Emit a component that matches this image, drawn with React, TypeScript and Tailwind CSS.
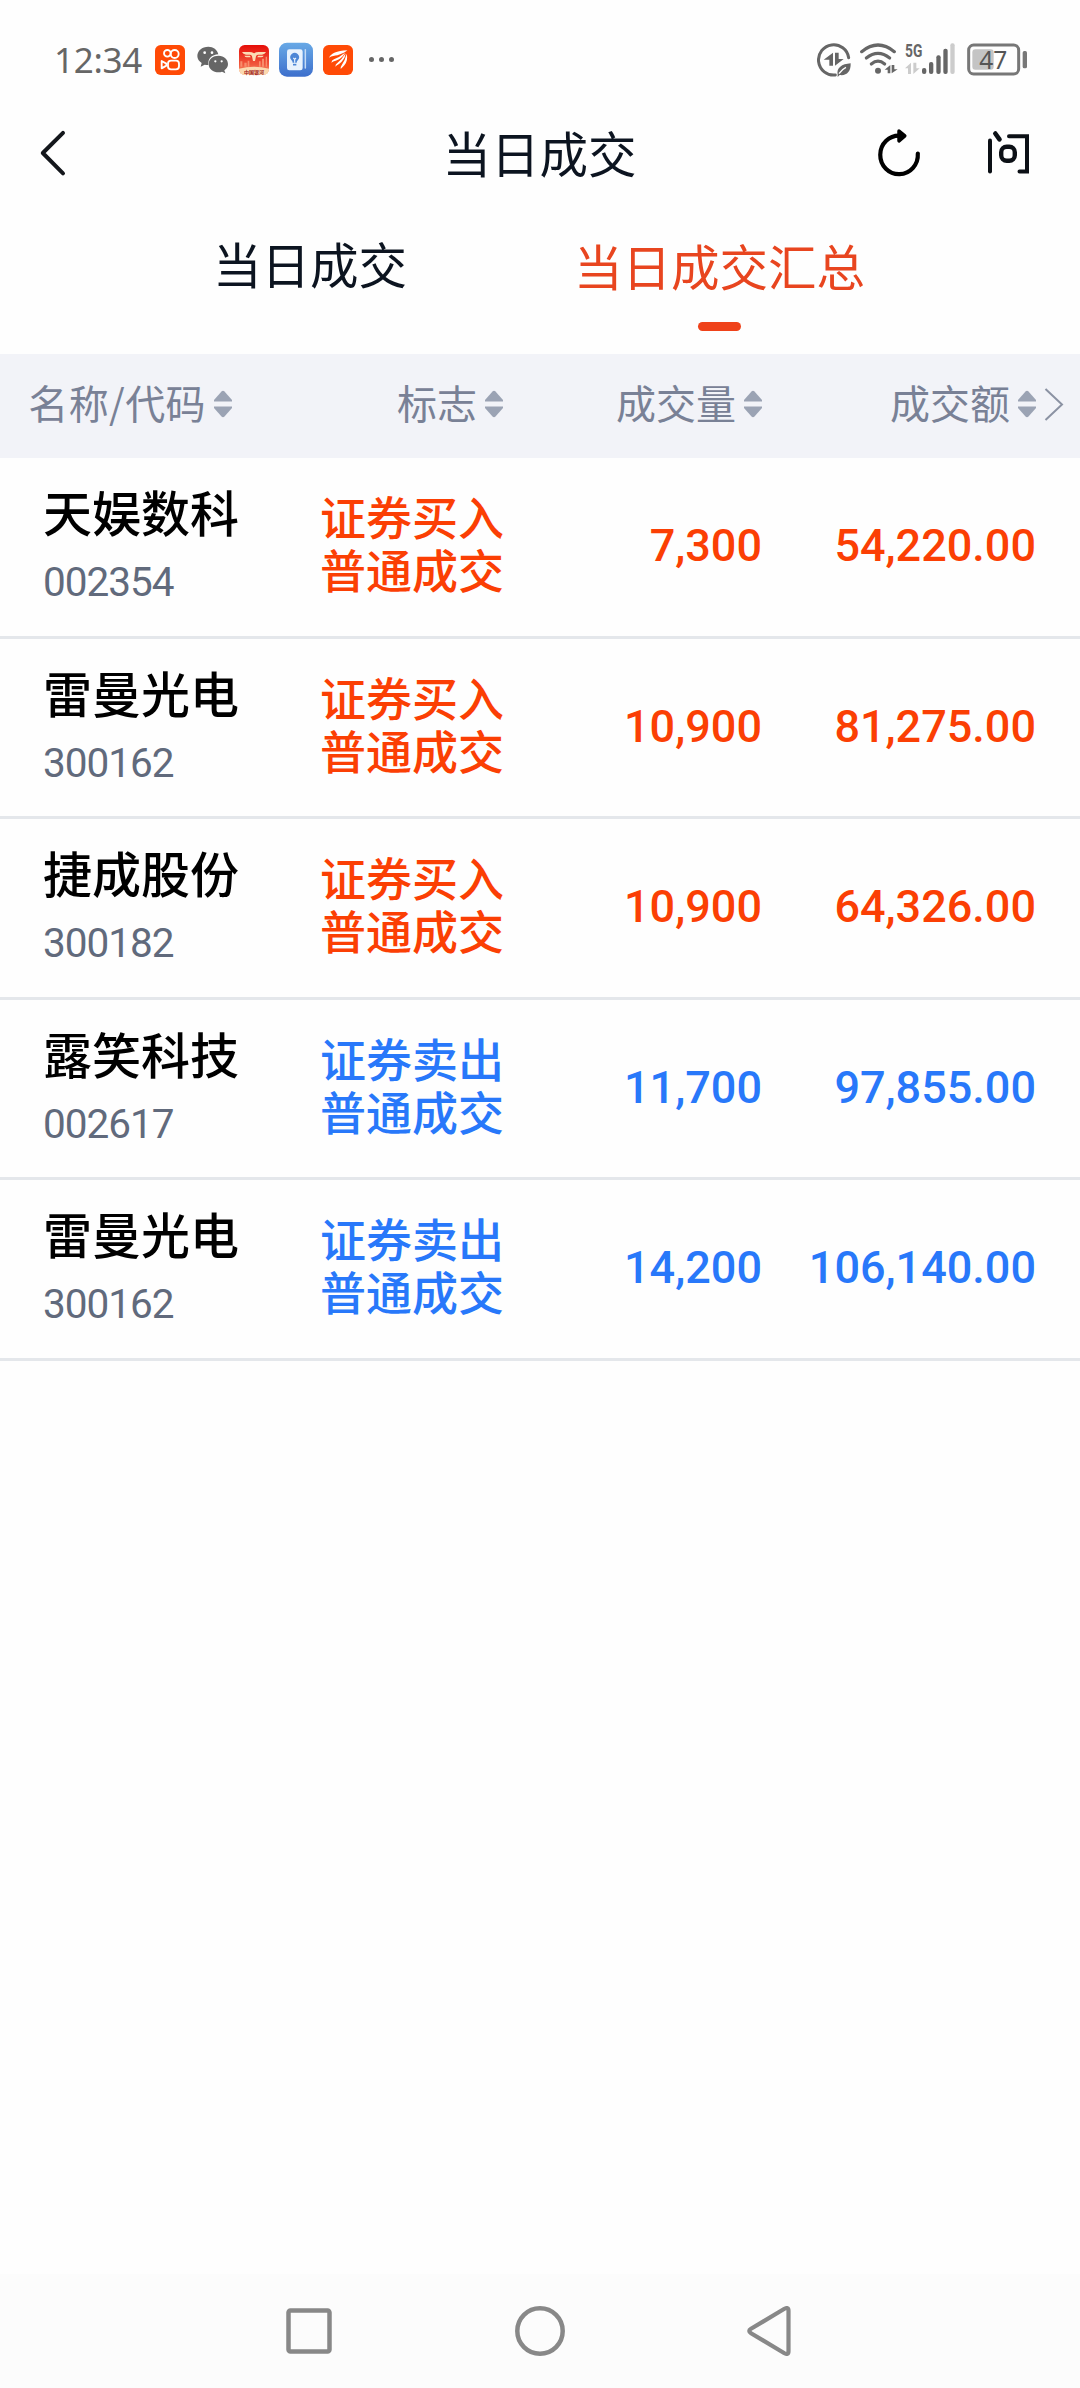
import clsx from "clsx";

interface Deal {
  name: string;
  code: string;
  side: "buy" | "sell";
  volume: string;
  amount: string;
}

const deals: Deal[] = [
  { name: "天娱数科", code: "002354", side: "buy", volume: "7,300", amount: "54,220.00" },
  { name: "雷曼光电", code: "300162", side: "buy", volume: "10,900", amount: "81,275.00" },
  { name: "捷成股份", code: "300182", side: "buy", volume: "10,900", amount: "64,326.00" },
  { name: "露笑科技", code: "002617", side: "sell", volume: "11,700", amount: "97,855.00" },
  { name: "雷曼光电", code: "300162", side: "sell", volume: "14,200", amount: "106,140.00" },
];

function StatusBar() {
  return (
    <div className="flex h-[110px] items-start pt-[42px] text-[#666666]">
      <div className="ml-[54px] w-[101px] font-['Noto_Sans'] text-[35px] leading-[35px] tracking-[-0.3px] whitespace-nowrap">
        12:34
      </div>
      {/* video app */}
      <svg className="h-[36px] w-[30px]" viewBox="0 0 90 108" fill="none">
        <rect y="9" width="90" height="90" rx="17" fill="#ff4a06" />
        <g stroke="#fff" strokeWidth="5.5">
          <circle cx="37" cy="34" r="10" />
          <circle cx="59" cy="36" r="12" />
          <rect x="39" y="56" width="33" height="26" rx="9" />
          <path d="M20 57v22l14-8v-6z" strokeLinejoin="round" />
        </g>
      </svg>
      {/* chat app */}
      <svg className="ml-[11px] h-[36px] w-[33px]" viewBox="0 0 99 108">
        <path
          d="M37 14C18 14 4 26 4 42c0 9 5 16 13 21l-3 11 12-6c4 1 7 1 11 1C35 50 48 38 67 37 64 23 52 14 37 14z"
          fill="#666"
        />
        <path
          d="M68 41c-17 0-30 10-30 25s13 25 30 25c4 0 7-1 10-2l10 5-3-9c7-5 11-11 11-19 0-14-12-25-28-25z"
          fill="#666"
        />
        <circle cx="26" cy="32" r="4" fill="#fff" />
        <circle cx="48" cy="32" r="4" fill="#fff" />
        <circle cx="58" cy="58" r="3.4" fill="#fff" />
        <circle cx="77" cy="58" r="3.4" fill="#fff" />
      </svg>
      {/* broker app */}
      <svg className="ml-[10px] h-[36px] w-[30px]" viewBox="0 0 90 108">
        <defs>
          <linearGradient id="broker" x1="0" y1="0" x2="0" y2="1">
            <stop offset="0" stopColor="#e60d08" />
            <stop offset="0.65" stopColor="#f0573c" />
            <stop offset="1" stopColor="#f7a47c" />
          </linearGradient>
          <clipPath id="brokerClip">
            <rect y="9" width="90" height="90" rx="17" />
          </clipPath>
        </defs>
        <g clipPath="url(#brokerClip)">
          <rect y="9" width="90" height="90" fill="url(#broker)" />
          <path d="M4 74V58h6v16zM16 74V62h7v12zM26 74V56h5v18zM60 74V58h5v16zM69 74V50h6v24zM80 74V44h4v30z" fill="#f88d6c" />
          <path d="M9 30h22q8 0 14 4 6-4 14-4h22q-3 7-12 8H57q-5 1-6 5l-3 14h-6l-3-14q-1-4-6-5H21q-9-1-12-8z" fill="#fbdcb4" />
          <path d="M16 41h17l2 5H24q-6 0-8-5zM74 41H57l-2 5h11q6 0 8-5z" fill="#fbdcb4" />
          <path d="M0 80q45-12 90 0v20H0z" fill="#fbd9b0" />
        </g>
        <text x="45" y="95" textAnchor="middle" fontSize="15" fontWeight="700" fill="#a02018" fontFamily="'Noto Sans CJK SC', sans-serif">
          中国银河
        </text>
      </svg>
      {/* notes app */}
      <svg className="ml-[10px] h-[36px] w-[34px]" viewBox="0 0 102 108" fill="none">
        <defs>
          <linearGradient id="notes" x1="0" y1="0" x2="0" y2="1">
            <stop offset="0" stopColor="#68a9e6" />
            <stop offset="1" stopColor="#3d6fcc" />
          </linearGradient>
        </defs>
        <rect y="2" width="102" height="102" rx="24" fill="url(#notes)" />
        <rect x="24" y="22" width="47" height="63" rx="7" fill="#e8f2fd" />
        <path d="M79 23v55" stroke="#c4dbf6" strokeWidth="4.5" strokeLinecap="round" />
        <path d="M41 62q0-4-4-8a13 13 0 1 1 20 0q-4 4-4 8z" fill="#4c86d6" />
        <path d="M47 62V52l-4-4m4 4l4-4" stroke="#e8f2fd" strokeWidth="3.5" />
        <path d="M42 68h10" stroke="#4c86d6" strokeWidth="5" />
      </svg>
      {/* delivery app */}
      <svg className="ml-[10px] h-[36px] w-[30px]" viewBox="0 0 90 108" fill="#fff">
        <rect y="9" width="90" height="90" rx="17" fill="#ff4a06" />
        <path d="M18 47C25 34 40 27 73 25 64 33 48 40 31 42q-7 1-13 5z" />
        <path d="M25 62q1-7 8-10 17-7 33-20-9 18-28 24-8 2-13 6z" />
        <path d="M37 74q0-7 6-11 14-11 25-29-3 21-20 32-7 4-11 8z" />
        <path d="M53 81q-1-6 3-11 10-14 15-35 5 20-7 35-6 7-11 11z" />
      </svg>
      <div className="mt-[15px] ml-[16px] flex gap-[5px]">
        <i className="size-[5px] rounded-full bg-[#666666]" />
        <i className="size-[5px] rounded-full bg-[#666666]" />
        <i className="size-[5px] rounded-full bg-[#666666]" />
      </div>

      {/* data saver */}
      <svg className="ml-[423px] h-[36px] w-[34px]" viewBox="0 0 102 108" fill="none">
        <path d="M55 99A45.500 45.500 0 1 1 95 47" stroke="#666" strokeWidth="9" strokeLinecap="round" />
        <path d="M48 32v39h-11V53H20zM54 32v39l26-20H65V32z" fill="#666" />
        <path d="M62 98c-4-20 12-32 39-34 1 26-13 38-33 35l-6 6z" fill="#666" />
        <path d="M66 95q8-13 21-19" stroke="#fff" strokeWidth="4" />
      </svg>
      {/* wifi */}
      <svg className="ml-[9px] h-[36px] w-[38px]" viewBox="0 0 114 108" fill="none">
        <g stroke="#666" strokeWidth="9.500" strokeLinecap="round">
          <path d="M5 29Q54-11 103 29" />
          <path d="M19 48q35-28 70 0" />
          <path d="M34 66q20-17 40 0" />
        </g>
        <circle cx="54" cy="86" r="9" fill="#666" />
        <path d="M91 69v25h-8V83H74zM95 69v25l18-12h-10V69z" fill="#666" />
      </svg>
      {/* mobile signal */}
      <svg className="ml-[7px] h-[36px] w-[51px] overflow-visible" viewBox="0 0 153 108">
        <text x="0" y="46" fontSize="55" fontWeight="700" textLength="52" lengthAdjust="spacingAndGlyphs" fill="#666" fontFamily="Roboto, sans-serif">
          5G
        </text>
        <path d="M18 62v34h-9V79H0zM25 62v34l19-17h-10V62z" fill="#ccc" />
        <g fill="#666">
          <rect x="51" y="78" width="13" height="18" rx="6" />
          <rect x="72" y="60" width="13" height="36" rx="6" />
          <rect x="94" y="40" width="13" height="56" rx="6" />
          <rect x="115" y="20" width="13" height="76" rx="6" />
        </g>
        <rect x="136" y="4" width="13" height="92" rx="6" fill="#ccc" />
      </svg>
      {/* battery */}
      <svg className="ml-[11px] h-[36px] w-[61px]" viewBox="0 0 183 108" fill="none">
        <rect x="5" y="9" width="150" height="87" rx="15" stroke="#777" strokeWidth="9" />
        <rect x="16" y="22" width="64" height="61" rx="9" fill="#c4c4c4" />
        <rect x="167" y="27" width="13" height="52" rx="5" fill="#777" />
        <text x="79" y="80" textAnchor="middle" fontSize="78" textLength="84" lengthAdjust="spacingAndGlyphs" fill="#555" fontFamily="'Noto Sans', sans-serif">
          47
        </text>
      </svg>
    </div>
  );
}

function NavBar() {
  return (
    <div className="flex h-[88px] items-center justify-between pr-[47px] pl-[37px]">
      <svg className="h-[50px] w-[32px]" viewBox="0 0 32 50" fill="none">
        <path d="M26 3.800L5.800 24L26 44.400" stroke="#14171c" strokeWidth="4" strokeLinecap="round" strokeLinejoin="round" />
      </svg>
      <h1 className="ml-[135px] pb-[5px] text-[48.500px] leading-[70px] text-[#0c1420]">当日成交</h1>
      <div className="flex items-center gap-[62px]">
        <svg className="h-[50px] w-[48px]" viewBox="0 0 48 50" fill="none">
          <path d="M42.800 24.500A18.800 19.300 0 1 1 25 6.600" stroke="#000" strokeWidth="4.200" strokeLinecap="round" />
          <path d="M24 2L29.800 6.800L24 11.800z" fill="#000" stroke="#000" strokeWidth="3.500" strokeLinejoin="round" />
        </svg>
        <svg className="h-[50px] w-[48px]" viewBox="0 0 48 50" fill="none" stroke="#0c1016" strokeWidth="4" strokeLinecap="round">
          <path d="M5 11.500V42.500" />
          <path d="M10.300 4.500L14.500 10.300" strokeWidth="4.600" />
          <path d="M24 7.200H42V42.500H34.500" />
          <rect x="16.200" y="17.700" width="13.600" height="14" rx="5.500" strokeWidth="4.400" />
        </svg>
      </div>
    </div>
  );
}

function Tabs() {
  return (
    <div className="flex h-[156px] pt-[30px] text-[48.500px] leading-[70px]">
      <div className="ml-[213px] w-[361px] text-[#0c1420]">当日成交</div>
      <div className="flex flex-col items-center pt-[2px] text-[#e8451f]">
        当日成交汇总
        <i className="mt-[22px] h-[9px] w-[43px] rounded-full bg-[#ef421a]" />
      </div>
    </div>
  );
}

function SortIcon() {
  return (
    <svg className="mt-[5px] ml-[8px] h-[28px] w-[18px] shrink-0" viewBox="0 0 18 28" fill="#9ba3b4">
      <path d="M7.500 1.500q1.500-1.500 3 0L18 10v1.500H0V10z" />
      <path d="M7.500 26.500q1.500 1.500 3 0L18 18v-1.500H0V18z" />
    </svg>
  );
}

function TableHead() {
  return (
    <div className="flex h-[104px] items-center bg-[#f2f3f8] pb-[9px] text-[40px] leading-[58px] text-[#798196]">
      <div className="flex w-[232px] items-center justify-end tracking-[0.4px] whitespace-nowrap">
        名称/代码
        <SortIcon />
      </div>
      <div className="flex w-[271px] items-center justify-end">
        标志
        <SortIcon />
      </div>
      <div className="flex w-[259px] items-center justify-end">
        成交量
        <SortIcon />
      </div>
      <div className="flex w-[274px] items-center justify-end">
        成交额
        <SortIcon />
      </div>
      <svg className="mt-[5px] ml-[8px] h-[34px] w-[20px]" viewBox="0 0 20 34" fill="none">
        <path d="M1.500 2L18 17.500L1.500 33" stroke="#8b92a3" strokeWidth="2" />
      </svg>
    </div>
  );
}

function DealRow({ deal }: { deal: Deal }) {
  const buy = deal.side === "buy";
  return (
    <div
      className={clsx(
        "flex h-[180.500px] border-b-[3px] border-[#e4e7eb] font-medium",
        buy ? "text-[#fb3f04]" : "text-[#2878fa]"
      )}
    >
      <div className="w-[275px] pt-[18px] pl-[43px]">
        <div className="text-[49px] leading-[70px] text-black">{deal.name}</div>
        <div className="mt-[11px] font-[Roboto] text-[40.500px] leading-[50px] font-normal tracking-[-1px] text-[#616a7c]">
          {deal.code}
        </div>
      </div>
      <div className="w-[229px] pt-[31px] text-right text-[46px] leading-[53px]">
        <div>{buy ? "证券买入" : "证券卖出"}</div>
        <div>普通成交</div>
      </div>
      <div className="w-[258px] pt-[61px] text-right font-[Roboto] text-[45px] leading-[54px]">{deal.volume}</div>
      <div className="w-[274px] pt-[61px] text-right font-[Roboto] text-[45px] leading-[54px]">{deal.amount}</div>
    </div>
  );
}

function SystemNav() {
  return (
    <div className="flex h-[114px] items-center justify-between bg-[#fcfcfc] pr-[289px] pl-[286px]">
      <svg className="h-[50px] w-[46px]" viewBox="0 0 46 50" fill="none">
        <rect x="2.500" y="4.500" width="41" height="41" rx="2" stroke="#888" strokeWidth="4.500" />
      </svg>
      <svg className="h-[50px] w-[50px]" viewBox="0 0 50 50" fill="none">
        <circle cx="25" cy="25" r="22.700" stroke="#888" strokeWidth="4.500" />
      </svg>
      <svg className="h-[50px] w-[44px]" viewBox="0 0 44 50" fill="none">
        <path d="M4 22.800L37 3Q41.500 0.500 41.500 4.500V45.500Q41.500 49.500 37 47L4 27.200Q0.500 25 4 22.800z" stroke="#888" strokeWidth="4.200" />
      </svg>
    </div>
  );
}

export default function App() {
  return (
    <div className="flex h-[2388px] w-[1080px] flex-col overflow-hidden bg-[#fefefe] font-['Noto_Sans_CJK_SC',sans-serif]">
      <StatusBar />
      <NavBar />
      <Tabs />
      <TableHead />
      <div className="flex-1">
        {deals.map((deal, i) => (
          <DealRow key={i} deal={deal} />
        ))}
      </div>
      <SystemNav />
    </div>
  );
}
